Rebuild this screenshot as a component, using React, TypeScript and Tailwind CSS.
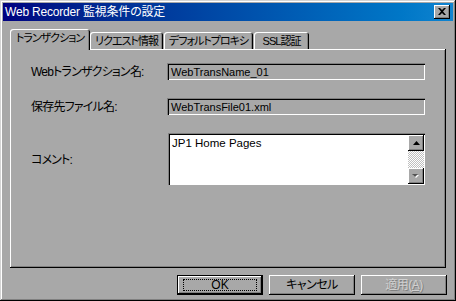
import React from 'react';

const raised =
  'shadow-[inset_-1px_-1px_#000,inset_1px_1px_#fff,inset_-2px_-2px_#808080]';
const sunken =
  'shadow-[inset_1px_1px_#808080,inset_2px_2px_#000,inset_-1px_-1px_#fff]';

const Tab: React.FC<{ label: string; width: string; active?: boolean }> = ({ label, width, active }) => (
  <div
    className={`${width} flex items-center justify-center whitespace-nowrap text-[11px] tracking-[-1px] rounded-t-[3px] bg-[#a8a8a8] shadow-[inset_1px_1px_#fff,inset_-1px_0_#000,inset_-2px_0_#808080] ${
      active ? 'h-[21px] -mb-[1px] -mx-[1px] z-10 pb-[2px]' : 'h-[17px] pt-[1px]'
    }`}
  >
    {label}
  </div>
);

const Button: React.FC<{ label: React.ReactNode; def?: boolean; disabled?: boolean }> = ({ label, def, disabled }) => (
  <div
    className={`w-[86px] h-[20px] flex items-center justify-center ${
      def
        ? 'shadow-[inset_0_0_0_1px_#000,inset_-2px_-2px_#000,inset_2px_2px_#fff,inset_-3px_-3px_#808080]'
        : raised
    }`}
  >
    {def ? (
      <div className="w-[74px] h-[12px] border border-dotted border-black flex items-center justify-center">{label}</div>
    ) : (
      <span className={`tracking-[-0.5px] ${disabled ? 'text-[#d0d0d0] [text-shadow:1px_1px_0_#808080]' : ''}`}>{label}</span>
    )}
  </div>
);

export default function App() {
  return (
    <div
      className={`w-[456px] h-[301px] bg-[#a8a8a8] p-[3px] flex flex-col text-[12px] leading-none text-black font-['Liberation_Sans','Noto_Sans_CJK_JP',sans-serif] [font-feature-settings:'palt'] shadow-[inset_-1px_-1px_#000,inset_1px_1px_#d4d4d4,inset_-2px_-2px_#808080,inset_2px_2px_#fff]`}
    >
      {/* title bar */}
      <div className="h-[18px] flex items-center justify-between pl-[2px] pr-[3px] bg-linear-to-r from-[#000080] to-[#1084d0]">
        <span className="text-white text-[12px] tracking-[-0.2px]">Web Recorder 監視条件の設定</span>
        <div className={`w-[16px] h-[14px] bg-[#a8a8a8] flex items-center justify-center ${raised}`}>
          <svg width="8" height="7" viewBox="0 0 8 7" className="-mt-[1px]">
            <path d="M0 0h2l2 2 2-2h2L5 3.5 8 7H6L4 5 2 7H0l3-3.5z" fill="#000" />
          </svg>
        </div>
      </div>

      {/* tabs */}
      <div className="mt-[8px] pl-[8px] flex items-end gap-[1px] h-[20px]">
        <Tab label="トランザクション" width="w-[80px]" active />
        <Tab label="リクエスト情報" width="w-[73px]" />
        <Tab label="デフォルトプロキシ" width="w-[89px]" />
        <Tab label="SSL認証" width="w-[55px]" />
      </div>

      {/* panel */}
      <div className={`ml-[7px] mr-[7px] h-[219px] pt-[14px] pl-[21px] ${raised}`}>
        <div className="grid grid-cols-[136px_258px] gap-y-[18px] items-center">
          <span className="tracking-[-0.8px]">Webトランザクション名:</span>
          <div className={`h-[17px] flex items-center pl-[4px] pt-[1px] text-[11px] ${sunken}`}>WebTransName_01</div>
          <span className="tracking-[-0.8px]">保存先ファイル名:</span>
          <div className={`h-[17px] flex items-center pl-[4px] pt-[1px] text-[11px] ${sunken}`}>WebTransFile01.xml</div>
          <span className="pt-[2px] tracking-[-0.8px]">コメント:</span>
          <div className={`h-[52px] ml-[1px] bg-white flex p-[2px] pr-[1px] pb-[1px] ${sunken}`}>
            <div className="flex-1 pl-[2px] pt-[3px] text-[11.5px]">JP1 Home Pages</div>
            <div className="w-[16px] flex flex-col">
              <div className={`h-[16px] bg-[#a8a8a8] flex items-center justify-center ${raised}`}>
                <svg width="7" height="4" viewBox="0 0 7 4">
                  <path d="M3.5 0L7 4H0z" fill="#000" />
                </svg>
              </div>
              <div className="flex-1 bg-[repeating-conic-gradient(#fff_0_25%,#c0c0c0_0_50%)] bg-[length:2px_2px]" />
              <div className={`h-[16px] bg-[#a8a8a8] flex items-center justify-center ${raised}`}>
                <svg width="8" height="5" viewBox="0 0 8 5">
                  <path d="M1 1h6L4 4z" fill="#fff" />
                  <path d="M0 0h6L3 3z" fill="#555" />
                </svg>
              </div>
            </div>
          </div>
        </div>
      </div>

      {/* buttons */}
      <div className="mt-[7px] pr-[6px] flex justify-end gap-[6px]">
        <Button label="OK" def />
        <Button label="キャンセル" />
        <Button label={<>適用(<span className="underline">A</span>)</>} disabled />
      </div>
    </div>
  );
}
